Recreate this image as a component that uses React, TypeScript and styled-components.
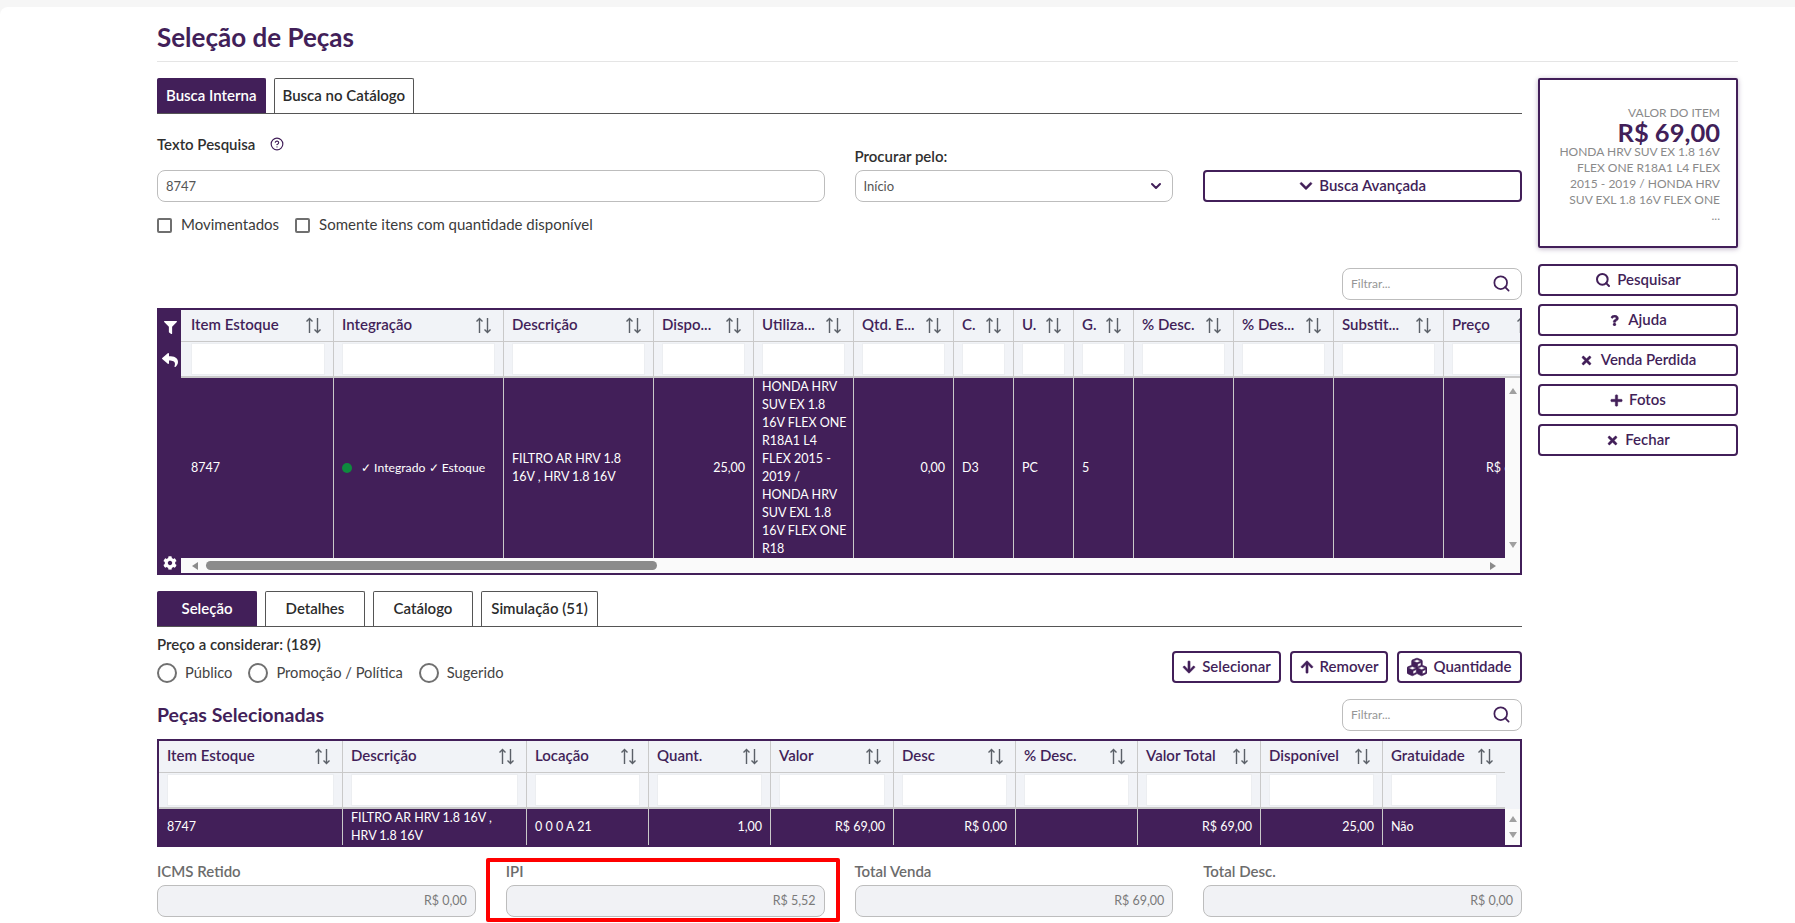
import React, { ReactNode } from 'react'
import styled, { createGlobalStyle } from 'styled-components'
import {
  FaArrowDown,
  FaArrowUp,
  FaChevronDown,
  FaCog,
  FaCubes,
  FaFilter,
  FaPlus,
  FaQuestion,
  FaReply,
  FaTimes,
} from 'react-icons/fa'
import { CircleHelp, ChevronDown, Search } from 'lucide-react'

const PURPLE = '#421f59'
const LINE = '#c9c9c9'
const HEAD_BG = '#f1f3f7'
const FONT = `Lato, "Noto Sans", sans-serif`

const GlobalStyle = createGlobalStyle`
  html, body {
    margin: 0;
    height: 100%;
    overflow: hidden;
    background: #f6f6f6;
    font-family: ${FONT};
    color: #333;
  }
  * { box-sizing: border-box; }
`

const Page = styled.div`
  padding-top: 7px;
  height: 923px;
`

const Sheet = styled.div`
  position: relative;
  height: 916px;
  background: #fff;
  border-top-left-radius: 8px;
  padding: 0 57px 0 157px;
  overflow: hidden;
`

const TitleBar = styled.div`
  height: 55px;
  border-bottom: 1px solid #e5e5e5;
  display: flex;
  align-items: center;
  padding-top: 6px;
`

const Title = styled.h1`
  margin: 0;
  font-size: 26px;
  line-height: 30px;
  font-weight: 700;
  color: ${PURPLE};
`

const Columns = styled.div`
  display: flex;
  gap: 16px;
  margin-top: 16px;
`

const Main = styled.div`
  width: 1365px;
`

const Side = styled.div`
  width: 200px;
  display: flex;
  flex-direction: column;
`

const TabBar = styled.div<{ $mt?: number; $gap: number }>`
  display: flex;
  gap: ${p => p.$gap}px;
  height: 36px;
  margin-top: ${p => p.$mt ?? 0}px;
  border-bottom: 1px solid #555;
`

const Tab = styled.div<{ $active?: boolean; $w?: number }>`
  height: 35px;
  padding: 0 8px 2px;
  width: ${p => (p.$w ? `${p.$w}px` : 'auto')};
  display: flex;
  align-items: center;
  justify-content: center;
  border: 1px solid ${p => (p.$active ? PURPLE : '#555')};
  border-bottom: none;
  border-radius: 2px 2px 0 0;
  background: ${p => (p.$active ? PURPLE : '#fff')};
  color: ${p => (p.$active ? '#fff' : '#2b2b2b')};
  font-size: 15px;
  font-weight: 600;
  white-space: nowrap;
`

const FormGrid = styled.div<{ $mt: number }>`
  display: grid;
  grid-template-columns: repeat(4, 1fr);
  column-gap: 30px;
  align-items: end;
  margin-top: ${p => p.$mt}px;
`

const Field = styled.div<{ $span?: number }>`
  grid-column: span ${p => p.$span ?? 1};
  min-width: 0;
`

const Label = styled.div<{ $mb?: number; $muted?: boolean }>`
  display: flex;
  align-items: center;
  gap: 15px;
  height: 20px;
  padding-bottom: 3px;
  margin-bottom: ${p => p.$mb ?? 3}px;
  font-size: 15px;
  font-weight: 600;
  color: ${p => (p.$muted ? '#6c6c6c' : '#2f2f2f')};
`

const HelpIcon = styled(CircleHelp)`
  color: ${PURPLE};
  margin-top: 1px;
`

const Control = styled.div<{ $disabled?: boolean }>`
  height: 32px;
  padding: 0 8px 1px;
  display: flex;
  align-items: center;
  justify-content: space-between;
  border: 1px solid #bdbdbd;
  border-radius: 8px;
  background: ${p => (p.$disabled ? '#f1f2f5' : '#fff')};
  font-size: 13px;
  color: #555;
`

const Amount = styled.span`
  margin-left: auto;
  color: #7a7a7a;
  font-size: 12.5px;
`

const Checks = styled.div`
  display: flex;
  align-items: center;
  height: 20px;
  margin-top: 13px;
`

const CheckBox = styled.span`
  width: 15px;
  height: 15px;
  border: 2px solid #6f6f6f;
  border-radius: 2px;
  margin-right: 9px;
`

const CheckText = styled.span`
  font-size: 15px;
  line-height: 18px;
  padding-bottom: 2px;
  color: #3b3b3b;
  margin-right: 16px;
`

const RightRow = styled.div<{ $mt: number }>`
  display: flex;
  justify-content: flex-end;
  margin-top: ${p => p.$mt}px;
`

const FilterBox = styled(Control)`
  width: 180px;
  font-size: 12px;
  color: #969696;
  svg {
    color: ${PURPLE};
    margin-right: 2px;
  }
`

const ActionButton = styled.div<{ $w?: number; $gap?: number }>`
  width: ${p => (p.$w ? `${p.$w}px` : '100%')};
  height: 32px;
  padding-bottom: 2px;
  display: flex;
  align-items: center;
  justify-content: center;
  gap: ${p => p.$gap ?? 6}px;
  border: 2px solid ${PURPLE};
  border-radius: 4px;
  background: #fff;
  color: ${PURPLE};
  font-size: 15px;
  font-weight: 600;
  white-space: nowrap;
  flex: none;
  svg {
    margin-top: 2px;
  }
  svg:not(.lucide) {
    stroke: currentColor;
    stroke-width: 16px;
  }
`

const Frame = styled.div<{ $mt: number }>`
  display: flex;
  margin-top: ${p => p.$mt}px;
  border: 2px solid ${PURPLE};
  background: ${HEAD_BG};
`

const Rail = styled.div`
  width: 22px;
  flex: none;
  background: ${PURPLE};
  color: #fff;
  display: flex;
  flex-direction: column;
  align-items: center;
  padding: 11px 0 3px;
  gap: 18px;
`

const RailGear = styled.div`
  margin-top: auto;
  line-height: 0;
`

const TableArea = styled.div`
  flex: 1;
  min-width: 0;
  display: flex;
  flex-direction: column;
`

const Row = styled.div<{ $cols: string; $firstPad: number }>`
  display: grid;
  grid-template-columns: ${p => p.$cols};
  width: max-content;
  > :first-child {
    padding-left: ${p => p.$firstPad}px;
  }
  > :last-child {
    border-right: none;
  }
`

const HeadClip = styled.div`
  overflow: hidden;
  background: ${HEAD_BG};
`

const HeadCell = styled.div`
  height: 32px;
  padding: 0 11px 0 8px;
  display: flex;
  align-items: center;
  justify-content: space-between;
  gap: 4px;
  border-right: 1px solid ${LINE};
  border-bottom: 1px solid ${LINE};
  color: ${PURPLE};
  font-size: 15px;
  font-weight: 600;
  white-space: nowrap;
  min-width: 0;
`

const HeadText = styled.span`
  padding-bottom: 3px;
`

const FilterCell = styled.div`
  height: 36px;
  padding: 1px 8px;
  border-right: 1px solid ${LINE};
  border-bottom: 2px solid ${LINE};
`

const FilterInput = styled.div`
  height: 100%;
  background: #fff;
  border: 1px solid #eceef1;
`

const BodyWrap = styled.div<{ $h: number }>`
  display: flex;
  height: ${p => p.$h}px;
`

const Viewport = styled.div`
  flex: 1;
  min-width: 0;
  overflow: hidden;
  background: ${PURPLE};
`

const Cell = styled.div<{ $right?: boolean; $h: number }>`
  height: ${p => p.$h}px;
  padding: 0 8px 1px;
  display: flex;
  align-items: center;
  justify-content: ${p => (p.$right ? 'flex-end' : 'flex-start')};
  border-right: 1px solid ${LINE};
  color: #fff;
  font-size: 12.5px;
  line-height: 18px;
  white-space: pre;
  overflow: hidden;
`

const Dot = styled.span`
  width: 10px;
  height: 10px;
  border-radius: 50%;
  background: #0f8a3e;
  margin-right: 9px;
  flex: none;
`

const StatusText = styled.span`
  white-space: nowrap;
  font-size: 12.2px;
`

const VTrack = styled.div<{ $pad: number }>`
  width: 15px;
  flex: none;
  background: #fafafa;
  display: flex;
  flex-direction: column;
  align-items: center;
  justify-content: space-between;
  padding: ${p => p.$pad}px 0;
`

const HTrack = styled.div`
  height: 15px;
  background: #fafafa;
  display: flex;
  align-items: center;
  padding-left: 11px;
  padding-right: 24px;
`

const HThumb = styled.div`
  width: 451px;
  height: 9px;
  margin-left: 8px;
  border-radius: 5px;
  background: #8b8b8b;
`

const Arrow = styled.span<{ $dir: 'up' | 'down' | 'left' | 'right' }>`
  width: 0;
  height: 0;
  flex: none;
  border-style: solid;
  border-color: transparent;
  ${p =>
    p.$dir === 'up' || p.$dir === 'down'
      ? `border-width: ${p.$dir === 'up' ? '0 4px 6px' : '6px 4px 0'};
         border-${p.$dir === 'up' ? 'bottom' : 'top'}-color: #a0a0a0;`
      : `border-width: ${p.$dir === 'left' ? '4px 6px 4px 0' : '4px 0 4px 6px'};
         border-${p.$dir === 'left' ? 'right' : 'left'}-color: #8b8b8b;`}
`

const RightArrow = styled(Arrow)`
  margin-left: auto;
`

const PriceRow = styled.div`
  display: flex;
  justify-content: space-between;
  align-items: flex-end;
  margin-top: 8px;
`

const PriceLabel = styled.div`
  font-size: 15px;
  line-height: 18px;
  font-weight: 600;
  color: #2f2f2f;
`

const Radios = styled.div`
  display: flex;
  align-items: center;
  margin-top: 10px;
`

const Radio = styled.span`
  width: 20px;
  height: 20px;
  border: 2px solid #707070;
  border-radius: 50%;
  margin-right: 8px;
`

const RadioText = styled.span`
  font-size: 14.7px;
  padding-bottom: 2px;
  color: #444;
  margin-right: 16px;
`

const ButtonGroup = styled.div`
  display: flex;
  gap: 9px;
`

const SectionRow = styled.div`
  display: flex;
  align-items: center;
  justify-content: space-between;
  margin-top: 16px;
`

const SectionTitle = styled.h2`
  margin: 0;
  padding-bottom: 2px;
  font-size: 19.5px;
  font-weight: 700;
  color: ${PURPLE};
`

const ValueCard = styled.div`
  height: 170px;
  margin-bottom: 16px;
  padding: 25px 16px 0 4px;
  border: 2px solid ${PURPLE};
  border-radius: 2px;
  box-shadow: 0 1px 5px rgba(66, 31, 89, 0.35);
  text-align: right;
  color: #8a8a8a;
  font-size: 12px;
  line-height: 16px;
`

const ValueAmount = styled.div`
  font-size: 25.5px;
  line-height: 23px;
  font-weight: 700;
  color: ${PURPLE};
`

const ValueText = styled.div`
  white-space: pre-line;
`

const SideStack = styled.div`
  display: flex;
  flex-direction: column;
  gap: 8px;
`

const RedMark = styled.div`
  position: absolute;
  left: 486px;
  top: 851px;
  width: 354px;
  height: 64px;
  border: 4px solid #f00;
  border-radius: 2px;
  pointer-events: none;
`

const SortIcon = () => (
  <svg width="17" height="17" viewBox="0 0 17 17" fill="none" stroke="#5b6068" strokeWidth="1.4" style={{ flex: 'none' }}>
    <path d="M4.5 16V1.5M1.5 4.5l3-3 3 3" />
    <path d="M12.5 1v14.5M9.5 12.5l3 3 3-3" />
  </svg>
)

type Col = { title: string; w: number }

const searchCols: Col[] = [
  { title: 'Item Estoque', w: 153 },
  { title: 'Integração', w: 170 },
  { title: 'Descrição', w: 150 },
  { title: 'Dispo...', w: 100 },
  { title: 'Utiliza...', w: 100 },
  { title: 'Qtd. E...', w: 100 },
  { title: 'C.', w: 60 },
  { title: 'U.', w: 60 },
  { title: 'G.', w: 60 },
  { title: '% Desc.', w: 100 },
  { title: '% Des...', w: 100 },
  { title: 'Substit...', w: 110 },
  { title: 'Preço', w: 100 },
]

const pickedCols: Col[] = [
  { title: 'Item Estoque', w: 184 },
  { title: 'Descrição', w: 184 },
  { title: 'Locação', w: 122 },
  { title: 'Quant.', w: 122 },
  { title: 'Valor', w: 123 },
  { title: 'Desc', w: 122 },
  { title: '% Desc.', w: 122 },
  { title: 'Valor Total', w: 123 },
  { title: 'Disponível', w: 122 },
  { title: 'Gratuidade', w: 122 },
]

const template = (cols: Col[]) => cols.map(c => `${c.w}px`).join(' ')

const TableHead: React.FC<{ cols: Col[]; firstPad: number }> = ({ cols, firstPad }) => (
  <HeadClip>
    <Row $cols={template(cols)} $firstPad={firstPad}>
      {cols.map(c => (
        <HeadCell key={c.title}>
          <HeadText>{c.title}</HeadText>
          <SortIcon />
        </HeadCell>
      ))}
    </Row>
    <Row $cols={template(cols)} $firstPad={firstPad}>
      {cols.map(c => (
        <FilterCell key={c.title}>
          <FilterInput />
        </FilterCell>
      ))}
    </Row>
  </HeadClip>
)

const Filter = () => (
  <FilterBox>
    Filtrar...
    <Search size={19} strokeWidth={2.2} />
  </FilterBox>
)

const usage = `HONDA HRV
SUV EX 1.8
16V FLEX ONE
R18A1 L4
FLEX 2015 -
2019 /
HONDA HRV
SUV EXL 1.8
16V FLEX ONE
R18`

const searchRow: { text?: ReactNode; right?: boolean }[] = [
  { text: '8747' },
  {
    text: (
      <>
        <Dot />
        <StatusText>✓ Integrado ✓ Estoque</StatusText>
      </>
    ),
  },
  { text: 'FILTRO AR HRV 1.8\n16V , HRV 1.8 16V' },
  { text: '25,00', right: true },
  { text: usage },
  { text: '0,00', right: true },
  { text: 'D3' },
  { text: 'PC' },
  { text: '5' },
  {},
  {},
  {},
  { text: 'R$ 69,00', right: true },
]

const pickedRow: { text?: string; right?: boolean }[] = [
  { text: '8747' },
  { text: 'FILTRO AR HRV 1.8 16V ,\nHRV 1.8 16V' },
  { text: '0 0 0 A 21' },
  { text: '1,00', right: true },
  { text: 'R$ 69,00', right: true },
  { text: 'R$ 0,00', right: true },
  {},
  { text: 'R$ 69,00', right: true },
  { text: '25,00', right: true },
  { text: 'Não' },
]

const totals = [
  { label: 'ICMS Retido', value: 'R$ 0,00' },
  { label: 'IPI', value: 'R$ 5,52' },
  { label: 'Total Venda', value: 'R$ 69,00' },
  { label: 'Total Desc.', value: 'R$ 0,00' },
]

const App = () => (
  <Page>
    <GlobalStyle />
    <Sheet>
      <TitleBar>
        <Title>Seleção de Peças</Title>
      </TitleBar>
      <Columns>
        <Main>
          <TabBar $gap={8}>
            <Tab $active>Busca Interna</Tab>
            <Tab>Busca no Catálogo</Tab>
          </TabBar>

          <FormGrid $mt={21}>
            <Field $span={2}>
              <Label $mb={15}>
                Texto Pesquisa
                <HelpIcon size={14} strokeWidth={2} />
              </Label>
              <Control>8747</Control>
            </Field>
            <Field>
              <Label>Procurar pelo:</Label>
              <Control>
                Início
                <ChevronDown size={16} strokeWidth={3} color={PURPLE} />
              </Control>
            </Field>
            <Field>
              <ActionButton>
                <FaChevronDown size={14} />
                Busca Avançada
              </ActionButton>
            </Field>
          </FormGrid>

          <Checks>
            <CheckBox />
            <CheckText>Movimentados</CheckText>
            <CheckBox />
            <CheckText>Somente itens com quantidade disponível</CheckText>
          </Checks>

          <RightRow $mt={33}>
            <Filter />
          </RightRow>

          <Frame $mt={8}>
            <Rail>
              <FaFilter size={13} />
              <FaReply size={16} />
              <RailGear>
                <FaCog size={14} />
              </RailGear>
            </Rail>
            <TableArea>
              <TableHead cols={searchCols} firstPad={10} />
              <BodyWrap $h={180}>
                <Viewport>
                  <Row $cols={template(searchCols)} $firstPad={10}>
                    {searchRow.map((c, i) => (
                      <Cell key={i} $h={180} $right={c.right}>
                        {c.text}
                      </Cell>
                    ))}
                  </Row>
                </Viewport>
                <VTrack $pad={10}>
                  <Arrow $dir="up" />
                  <Arrow $dir="down" />
                </VTrack>
              </BodyWrap>
              <HTrack>
                <Arrow $dir="left" />
                <HThumb />
                <RightArrow $dir="right" />
              </HTrack>
            </TableArea>
          </Frame>

          <TabBar $mt={16} $gap={8}>
            <Tab $active $w={100}>Seleção</Tab>
            <Tab $w={100}>Detalhes</Tab>
            <Tab $w={100}>Catálogo</Tab>
            <Tab $w={117}>Simulação (51)</Tab>
          </TabBar>

          <PriceRow>
            <div>
              <PriceLabel>Preço a considerar: (189)</PriceLabel>
              <Radios>
                <Radio />
                <RadioText>Público</RadioText>
                <Radio />
                <RadioText>Promoção / Política</RadioText>
                <Radio />
                <RadioText>Sugerido</RadioText>
              </Radios>
            </div>
            <ButtonGroup>
              <ActionButton $w={109}>
                <FaArrowDown size={14} />
                Selecionar
              </ActionButton>
              <ActionButton $w={98}>
                <FaArrowUp size={14} />
                Remover
              </ActionButton>
              <ActionButton $w={125}>
                <FaCubes size={20} />
                Quantidade
              </ActionButton>
            </ButtonGroup>
          </PriceRow>

          <SectionRow>
            <SectionTitle>Peças Selecionadas</SectionTitle>
            <Filter />
          </SectionRow>

          <Frame $mt={8}>
            <TableArea>
              <TableHead cols={pickedCols} firstPad={8} />
              <BodyWrap $h={36}>
                <Viewport>
                  <Row $cols={template(pickedCols)} $firstPad={8}>
                    {pickedRow.map((c, i) => (
                      <Cell key={i} $h={36} $right={c.right}>
                        {c.text}
                      </Cell>
                    ))}
                  </Row>
                </Viewport>
                <VTrack $pad={7}>
                  <Arrow $dir="up" />
                  <Arrow $dir="down" />
                </VTrack>
              </BodyWrap>
            </TableArea>
          </Frame>

          <FormGrid $mt={15}>
            {totals.map(t => (
              <Field key={t.label}>
                <Label $muted>{t.label}</Label>
                <Control $disabled>
                  <Amount>{t.value}</Amount>
                </Control>
              </Field>
            ))}
          </FormGrid>
        </Main>

        <Side>
          <ValueCard>
            VALOR DO ITEM
            <ValueAmount>R$ 69,00</ValueAmount>
            <ValueText>
              {'HONDA HRV SUV EX 1.8 16V\nFLEX ONE R18A1 L4 FLEX\n2015 - 2019 / HONDA HRV\nSUV EXL 1.8 16V FLEX ONE\n...'}
            </ValueText>
          </ValueCard>
          <SideStack>
            <ActionButton>
              <Search size={16} strokeWidth={3} />
              Pesquisar
            </ActionButton>
            <ActionButton $gap={8}>
              <FaQuestion size={11} />
              Ajuda
            </ActionButton>
            <ActionButton $gap={8}>
              <FaTimes size={13} />
              Venda Perdida
            </ActionButton>
            <ActionButton>
              <FaPlus size={13} />
              Fotos
            </ActionButton>
            <ActionButton>
              <FaTimes size={13} />
              Fechar
            </ActionButton>
          </SideStack>
        </Side>
      </Columns>
      <RedMark />
    </Sheet>
  </Page>
)

export default App
